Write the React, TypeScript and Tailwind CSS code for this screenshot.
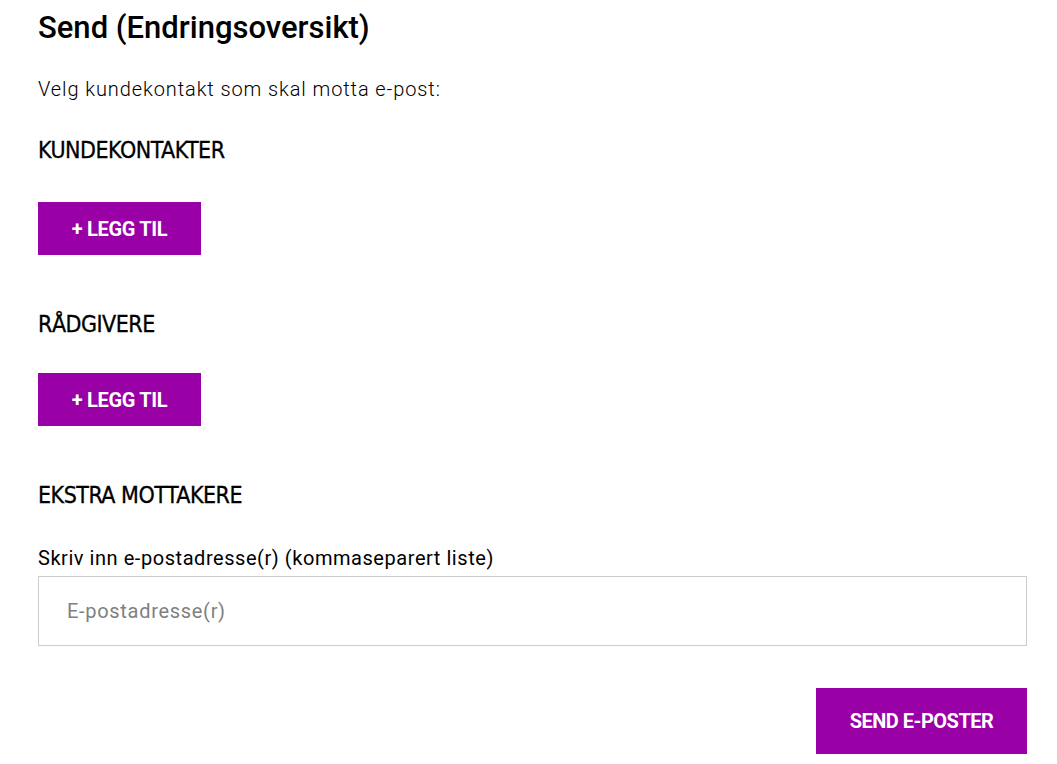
import React from "react";

const font = { fontFamily: "Roboto, 'Liberation Sans', sans-serif" };

function AddButton() {
  return (
    <button className="w-[163px] h-[53px] bg-[#9900a6] text-white text-[20px] font-bold tracking-[-0.3px]">
      + LEGG TIL
    </button>
  );
}

function Heading({ children, className = "" }: { children: React.ReactNode; className?: string }) {
  return (
    <h2
      className={`text-[23px] leading-[28px] font-normal tracking-[-0.5px] [font-family:'DejaVu_Sans_Condensed','DejaVu_Sans',sans-serif] [font-stretch:condensed] [-webkit-text-stroke:0.3px_black] ${className}`}
    >
      {children}
    </h2>
  );
}

export default function App() {
  return (
    <div className="bg-white w-[1057px] h-[764px] pl-[38px] pr-[30px] pt-[8px] text-black" style={font}>
      <h1 className="text-[31px] leading-[40px] font-medium">Send (Endringsoversikt)</h1>
      <p className="mt-[29px] text-[20px] leading-[24px] font-light tracking-[0.9px]">Velg kundekontakt som skal motta e-post:</p>
      <Heading className="mt-[35px]">KUNDEKONTAKTER</Heading>
      <div className="mt-[38px]"><AddButton /></div>
      <Heading className="mt-[55px]">RÅDGIVERE</Heading>
      <div className="mt-[35px]"><AddButton /></div>
      <Heading className="mt-[55px]">EKSTRA MOTTAKERE</Heading>
      <label className="block mt-[37px] text-[20px] leading-[24px] tracking-[0.55px]">Skriv inn e-postadresse(r) (kommaseparert liste)</label>
      <input
        className="mt-[6px] block w-full h-[70px] border border-[#cccccc] px-[28px] text-[20px] tracking-[0.7px] placeholder:text-[#808080] outline-none"
        placeholder="E-postadresse(r)"
        style={font}
      />
      <div className="flex justify-end mt-[42px]">
        <button className="w-[211px] h-[66px] bg-[#9900a6] text-white text-[20px] font-bold tracking-[-0.5px]">SEND E-POSTER</button>
      </div>
    </div>
  );
}
